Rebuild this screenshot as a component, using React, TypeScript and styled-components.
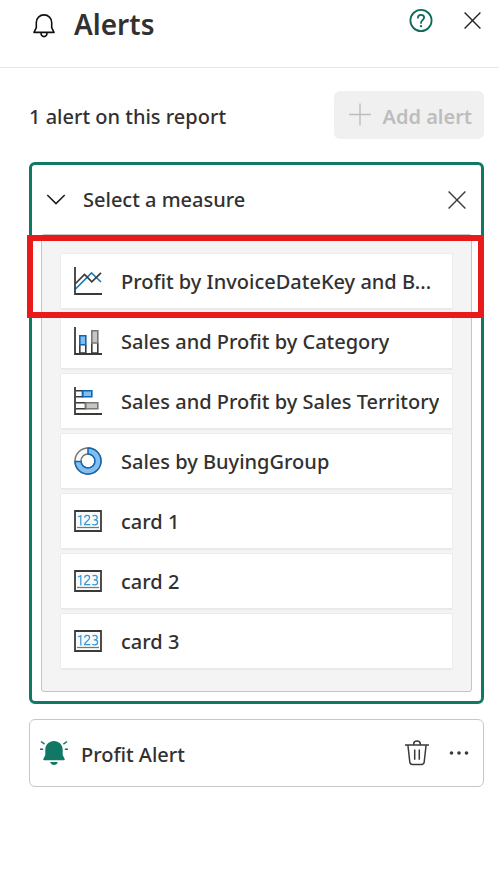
import React from "react";
import styled, { createGlobalStyle } from "styled-components";

const GlobalStyle = createGlobalStyle`
  * { box-sizing: border-box; }
  body {
    margin: 0;
    background: #ffffff;
    color: #323130;
    font-family: "Noto Sans", "Open Sans", sans-serif;
    font-size: 20px;
    line-height: 28px;
    font-weight: 500;
  }
  button { font: inherit; color: inherit; }
  svg { display: block; flex: none; }
`;

const Header = styled.header`
  display: flex;
  justify-content: space-between;
  height: 68px;
  padding: 0 15px 0 32px;
  border-bottom: 1px solid #e6e6e6;
`;

const TitleGroup = styled.div`
  display: flex;
  align-items: center;
  gap: 18px;
  height: 51px;
`;

const Title = styled.h1`
  margin: 0;
  font-size: 28px;
  line-height: 36px;
  font-weight: 600;
  padding-bottom: 4px;
`;

const HeaderActions = styled.div`
  display: flex;
  align-items: center;
  gap: 25px;
  height: 41px;
`;

const IconButton = styled.button<{ $size: number }>`
  display: flex;
  align-items: center;
  justify-content: center;
  flex: none;
  width: ${(p) => p.$size}px;
  height: ${(p) => p.$size}px;
  padding: 0;
  border: 0;
  background: transparent;
  cursor: pointer;
`;

const Content = styled.main`
  display: flex;
  flex-direction: column;
  padding: 23px 15px 24px 29px;
`;

const Summary = styled.div`
  display: flex;
  align-items: center;
  justify-content: space-between;
  margin-bottom: 23px;
`;

const SummaryText = styled.p`
  margin: 0;
  padding-top: 3px;
`;

const AddButton = styled.button`
  display: flex;
  align-items: center;
  gap: 10px;
  height: 48px;
  padding: 0 12px 0 14px;
  border: 0;
  border-radius: 6px;
  background: #f0f0f0;
  color: #bdbdbd;
  font-weight: 600;

  span { padding-top: 3px; }
`;

const MeasureCard = styled.section`
  padding: 0 9px 9px;
  border: 3px solid #117865;
  border-radius: 6px;
  margin-bottom: 15px;
`;

const MeasureHeader = styled.div`
  display: flex;
  align-items: center;
  justify-content: space-between;
  height: 69px;
  padding: 0 2px;
`;

const Disclosure = styled.button`
  display: flex;
  align-items: center;
  gap: 14px;
  padding: 0;
  border: 0;
  background: transparent;
  cursor: pointer;
`;

const MeasureList = styled.ul`
  display: flex;
  flex-direction: column;
  gap: 3px;
  margin: 0;
  padding: 18px 18px 21px;
  list-style: none;
  background: #f4f4f4;
  border: 1px solid #c4c4c4;
  border-radius: 3px;
`;

const MeasureItem = styled.li`
  position: relative;
`;

const MeasureButton = styled.button`
  display: flex;
  align-items: center;
  gap: 19px;
  width: 100%;
  height: 57px;
  padding: 0 8px 0 13px;
  border: 1px solid #ebebeb;
  border-bottom: 2px solid #e9e9e9;
  border-radius: 2px;
  background: #ffffff;
  text-align: left;
  cursor: pointer;
`;

const MeasureLabel = styled.span`
  min-width: 0;
  padding-top: 1px;
  overflow: hidden;
  text-overflow: ellipsis;
  white-space: nowrap;
`;

const Highlight = styled.div`
  position: absolute;
  z-index: 1;
  top: -18px;
  right: -31px;
  bottom: -8px;
  left: -33px;
  border: 6px solid #e81a1a;
  pointer-events: none;
`;

const AlertCard = styled.section`
  display: flex;
  align-items: center;
  height: 68px;
  padding: 0 12px 0 10px;
  border: 1px solid #c7c7c7;
  border-radius: 6px;
`;

const AlertName = styled.span`
  flex: 1;
  padding: 3px 0 0 13px;
`;

const AlertActions = styled.div`
  display: flex;
  align-items: center;
  gap: 18px;
`;

const BellIcon = () => (
  <svg width="24" height="24" viewBox="0 0 24 24" fill="none" stroke="#111" strokeWidth="1.6" strokeLinejoin="round" aria-hidden="true">
    <path d="M12 .9c-4.300 0-7.700 3.300-7.700 7.600v5.100L2 18.400h20l-2.300-4.800V8.500C19.700 4.200 16.300.9 12 .9Z" />
    <path d="M9 18.600c0 2.500 1.300 4 3 4s3-1.500 3-4" />
  </svg>
);

const HelpIcon = () => (
  <svg width="24" height="24" viewBox="0 0 24 24" fill="none" stroke="#0f6b5a" strokeWidth="1.8" strokeLinecap="round" aria-hidden="true">
    <circle cx="12" cy="11.500" r="10.600" />
    <path d="M8.900 8.700c0-1.800 1.300-2.900 3.100-2.900s3.100 1.100 3.100 2.800c0 2.400-3.100 2.700-3.100 5.300" />
    <circle cx="12" cy="17.100" r="1.200" fill="#0f6b5a" stroke="none" />
  </svg>
);

const CloseIcon = ({ size, color }: { size: number; color: string }) => (
  <svg width={size} height={size} viewBox={`0 0 ${size} ${size}`} stroke={color} strokeWidth="1.4" aria-hidden="true">
    <path d={`M.6.6 ${size - 0.6} ${size - 0.6}M${size - 0.6}.6.6 ${size - 0.6}`} />
  </svg>
);

const PlusIcon = () => (
  <svg width="24" height="24" viewBox="0 0 24 24" stroke="#bdbdbd" strokeWidth="1.4" aria-hidden="true">
    <path d="M12 .500v22M1 11.500h22" />
  </svg>
);

const ChevronIcon = () => (
  <svg width="20" height="12" viewBox="0 0 20 12" fill="none" stroke="#1b1a19" strokeWidth="1.5" aria-hidden="true">
    <path d="m1.300 1 8.700 8.600L18.700 1" />
  </svg>
);

const LineChartIcon = () => (
  <svg width="28" height="28" viewBox="0 0 28 28" fill="none" strokeWidth="1.7" aria-hidden="true">
    <path d="M1.500 22 17.500 6l9.500 9" stroke="#1f7ab8" />
    <path d="m1.500 16.500 9-9 7.300 7.300L27 5.800" stroke="#3a3a38" />
    <path d="M1 0v27h27" stroke="#3a3a38" strokeWidth="1.8" />
  </svg>
);

const ColumnChartIcon = () => (
  <svg width="28" height="28" viewBox="0 0 28 28" fill="none" strokeWidth="1.6" aria-hidden="true">
    <path d="M5.800 18v8h6v-8M17.800 16v10h6V16" fill="#fafafa" stroke="#3a3a38" />
    <path d="M5.800 8.800h6v9h-6z" fill="#83beec" stroke="#1066b0" />
    <path d="M17.800 3.800h6V16h-6z" fill="#c8c6c4" stroke="#797774" />
    <path d="M1 0v27h27" stroke="#3a3a38" strokeWidth="1.8" />
  </svg>
);

const BarChartIcon = () => (
  <svg width="28" height="28" viewBox="0 0 28 28" fill="none" strokeWidth="1.6" aria-hidden="true">
    <path d="M2 3.800h6.500v6H2M2 15.800h9.500v6H2" fill="#fafafa" stroke="#3a3a38" />
    <path d="M8.800 3.800h9v6h-9z" fill="#83beec" stroke="#1066b0" />
    <path d="M11.800 15.800h12v6h-12z" fill="#c8c6c4" stroke="#797774" />
    <path d="M1 0v27h27" stroke="#3a3a38" strokeWidth="1.8" />
  </svg>
);

const DonutIcon = () => (
  <svg width="28" height="28" viewBox="0 0 28 28" strokeWidth="1.5" aria-hidden="true">
    <circle cx="14" cy="14" r="13" fill="#fafafa" stroke="#797774" />
    <circle cx="14" cy="14" r="7" fill="#fff" stroke="#797774" />
    <path d="M14 1a13 13 0 1 1-13 13.400h6A7 7 0 1 0 14 7Z" fill="#83beec" stroke="#1066b0" />
  </svg>
);

const CardIcon = () => (
  <svg width="28" height="22" viewBox="0 0 28 22" fill="none" aria-hidden="true">
    <path d="M1 1h26v20H1z" fill="#fafafa" stroke="#3a3a38" strokeWidth="1.8" />
    <path d="M3 17.500h22" stroke="#797774" strokeWidth="1.2" />
    <g stroke="#3496d4" strokeWidth="1.2">
      <path d="m4 7 2.800-1.400v9.800" />
      <path d="M10.700 7.800c0-1.400 1-2.400 2.500-2.400s2.400 1 2.400 2.300c0 2.700-4.700 4-5 7h5.700" />
      <path d="M18.500 6.100c.7-.5 1.400-.7 2.300-.7 1.400 0 2.400.8 2.400 2.200s-1 2.200-2.400 2.200h-1 1.100c1.600 0 2.700.8 2.700 2.500s-1.300 2.600-2.900 2.600c-1 0-1.800-.2-2.500-.7" />
    </g>
  </svg>
);

const RingingBellIcon = () => (
  <svg width="28" height="26" viewBox="0 0 28 26" fill="#117865" aria-hidden="true">
    <path d="M14 1c-4.900 0-8.700 3.800-8.700 8.500v5.400l-2 4.200c-.3.600.1 1.100.7 1.100h20c.6 0 1-.5.700-1.100l-2-4.200V9.500C22.700 4.800 18.900 1 14 1Z" />
    <path d="M10.200 22h7.600c-.5 1.900-1.900 3-3.800 3s-3.300-1.100-3.800-3Z" />
    <path d="m1 1.500 3.600 2.700m22.400-2.700-3.600 2.700M0 9.200h3.200m21.600 0H28" stroke="#117865" strokeWidth="1.5" />
  </svg>
);

const TrashIcon = () => (
  <svg width="24" height="26" viewBox="0 0 24 26" fill="none" stroke="#3b3a39" strokeWidth="1.5" aria-hidden="true">
    <path d="M0 4.900h24M8.700 4.600V4c0-1.700 1.100-2.900 3.300-2.900s3.300 1.200 3.300 2.900v.6" />
    <path d="m2.900 5 1.900 17c.2 1.600 1.100 2.500 2.600 2.500h9.200c1.500 0 2.400-.9 2.600-2.500l1.900-17M9.700 9.500v10.200M14.300 9.500v10.200" />
  </svg>
);

const MoreIcon = () => (
  <svg width="20" height="4" viewBox="0 0 20 4" fill="#3b3a39" aria-hidden="true">
    <circle cx="2.500" cy="2" r="1.800" />
    <circle cx="10" cy="2" r="1.800" />
    <circle cx="17.500" cy="2" r="1.800" />
  </svg>
);

const measures = [
  { label: "Profit by InvoiceDateKey and B...", icon: <LineChartIcon />, highlighted: true },
  { label: "Sales and Profit by Category", icon: <ColumnChartIcon /> },
  { label: "Sales and Profit by Sales Territory", icon: <BarChartIcon /> },
  { label: "Sales by BuyingGroup", icon: <DonutIcon /> },
  { label: "card 1", icon: <CardIcon /> },
  { label: "card 2", icon: <CardIcon /> },
  { label: "card 3", icon: <CardIcon /> },
];

export default function App() {
  return (
    <>
      <GlobalStyle />
      <Header>
        <TitleGroup>
          <BellIcon />
          <Title>Alerts</Title>
        </TitleGroup>
        <HeaderActions>
          <IconButton $size={28} aria-label="Help"><HelpIcon /></IconButton>
          <IconButton $size={24} aria-label="Close"><CloseIcon size={17} color="#252423" /></IconButton>
        </HeaderActions>
      </Header>
      <Content>
        <Summary>
          <SummaryText>1 alert on this report</SummaryText>
          <AddButton disabled>
            <PlusIcon />
            <span>Add alert</span>
          </AddButton>
        </Summary>
        <MeasureCard>
          <MeasureHeader>
            <Disclosure aria-expanded="true">
              <IconButton as="span" $size={26}><ChevronIcon /></IconButton>
              <span>Select a measure</span>
            </Disclosure>
            <IconButton $size={26} aria-label="Cancel"><CloseIcon size={18} color="#3b3a39" /></IconButton>
          </MeasureHeader>
          <MeasureList>
            {measures.map((m) => (
              <MeasureItem key={m.label}>
                <MeasureButton>
                  {m.icon}
                  <MeasureLabel>{m.label}</MeasureLabel>
                </MeasureButton>
                {m.highlighted && <Highlight />}
              </MeasureItem>
            ))}
          </MeasureList>
        </MeasureCard>
        <AlertCard>
          <RingingBellIcon />
          <AlertName>Profit Alert</AlertName>
          <AlertActions>
            <IconButton $size={24} aria-label="Delete"><TrashIcon /></IconButton>
            <IconButton $size={24} aria-label="More options"><MoreIcon /></IconButton>
          </AlertActions>
        </AlertCard>
      </Content>
    </>
  );
}
